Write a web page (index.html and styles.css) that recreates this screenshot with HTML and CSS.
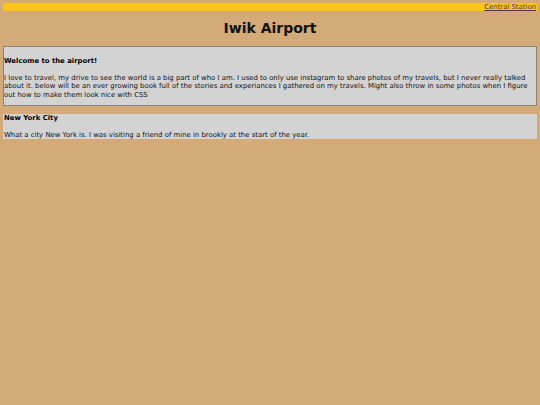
FILE: index.html
```html
<!DOCTYPE html>
<html>
<head>
<meta charset="utf-8">
<title>Iwik Airport</title>
<link rel="stylesheet" href="styles.css">
</head>
<body>
<nav class="topbar"><a class="nav-link" href="#">Central Station</a></nav>
<h1 class="title">Iwik Airport</h1>
<section class="card card-welcome">
<h4 class="card-title">Welcome to the airport!</h4>
<p class="card-text">I love to travel, my drive to see the world is a big part of who I am. I used to only use instagram to share photos of my travels, but I never really talked about it. below will be an ever growing book full of the stories and experiances I gathered on my travels. Might also throw in some photos when I figure out how to make them look nice with CSS</p>
</section>
<section class="card card-story">
<h4 class="card-title">New York City</h4>
<p class="card-text">What a city New York is. I was visiting a friend of mine in brookly at the start of the year.</p>
</section>
</body>
</html>
```
FILE: styles.css
```css
html, body {
  margin: 0;
  padding: 0;
}
body {
  background: #d3aa78;
  font-family: "DejaVu Sans", Verdana, sans-serif;
  font-size: 6.9px;
  color: #111;
  padding: 3px 3px;
  width: 534px;
}
.topbar {
  background: #f9c516;
  height: 8px;
  display: flex;
  justify-content: flex-end;
  align-items: center;
  padding-right: 1px;
}
.nav-link {
  color: #4a3a50;
  font-size: 6.9px;
  line-height: 8px;
}
.title {
  font-size: 14px;
  font-weight: bold;
  text-align: center;
  margin: 9px 0 9px;
  line-height: 17px;
}
.card {
  background: #d3d3d3;
}
.card-welcome {
  border: 1px solid #8c8378;
  padding: 10px 0 6px;
}
.card-story {
  margin-top: 8px;
  padding-left: 1px;
}
.card-title {
  font-size: 6.9px;
  font-weight: bold;
  line-height: 8.5px;
  margin: 0 0 8px;
  color: #000;
}
.card-text {
  margin: 0;
  line-height: 8.5px;
}
```
